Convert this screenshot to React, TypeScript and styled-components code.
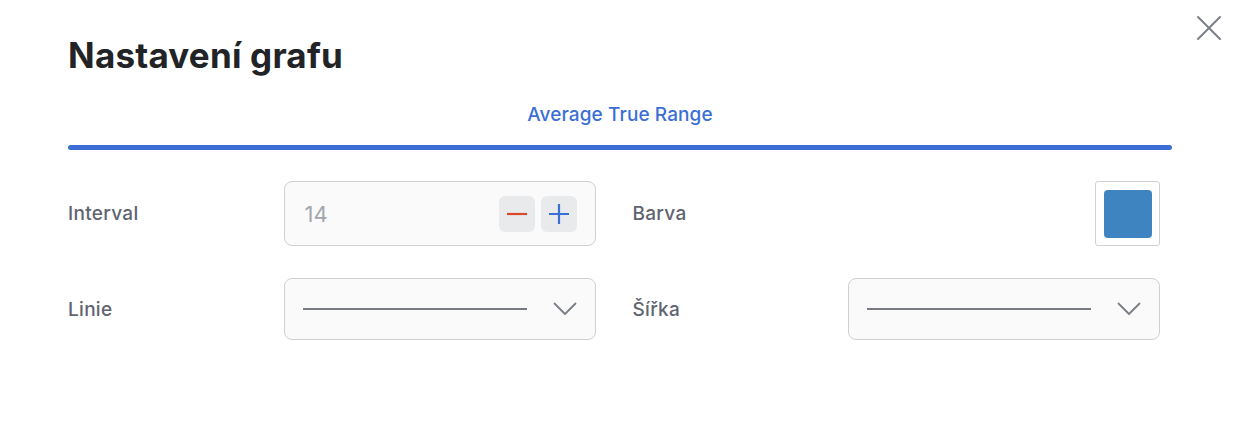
import React from 'react'
import styled, {createGlobalStyle} from 'styled-components'

const GlobalStyle = createGlobalStyle`
  html, body {
    margin: 0;
    padding: 0;
    background: #fff;
    font-family: Inter, Roboto, "Noto Sans", Arial, sans-serif;
  }
`

const blue = '#3b6fd6'

export default function App() {
  return (
    <>
      <GlobalStyle />
      <Modal>
        <CloseButton aria-label="Zavřít">
          <svg width="26" height="26" viewBox="0 0 26 26">
            <path d="M2 2 L24 24 M24 2 L2 24" stroke="#7b7f87" strokeWidth="2" strokeLinecap="round" />
          </svg>
        </CloseButton>

        <Title>Nastavení grafu</Title>

        <Tabs>
          <Tab>Average True Range</Tab>
          <TabBar />
        </Tabs>

        <Grid>
          <Field>
            <Label>Interval</Label>
            <NumberBox>
              <NumberValue>14</NumberValue>
              <Steppers>
                <StepButton aria-label="Ubrat">
                  <svg width="22" height="22" viewBox="0 0 22 22">
                    <path d="M1 11 H21" stroke="#d9482b" strokeWidth="2.2" />
                  </svg>
                </StepButton>
                <StepButton aria-label="Přidat">
                  <svg width="22" height="22" viewBox="0 0 22 22">
                    <path d="M1 11 H21 M11 1 V21" stroke={blue} strokeWidth="2.2" />
                  </svg>
                </StepButton>
              </Steppers>
            </NumberBox>
          </Field>

          <Field>
            <Label>Barva</Label>
            <SwatchBox>
              <Swatch $color="#3d84c0" />
            </SwatchBox>
          </Field>

          <Field>
            <Label>Linie</Label>
            <SelectBox>
              <LineSample />
              <Chevron />
            </SelectBox>
          </Field>

          <Field>
            <Label>Šířka</Label>
            <SelectBox>
              <LineSample />
              <Chevron />
            </SelectBox>
          </Field>
        </Grid>
      </Modal>
    </>
  )
}

const Chevron = () => (
  <svg width="24" height="14" viewBox="0 0 24 14">
    <path d="M1.5 1.5 L12 12 L22.5 1.5" fill="none" stroke="#7b7f87" strokeWidth="1.8" strokeLinecap="round" strokeLinejoin="round" />
  </svg>
)

const Modal = styled.div`
  position: relative;
  width: 1240px;
  height: 428px;
  box-sizing: border-box;
  padding: 28px 68px 0 68px;
`

const CloseButton = styled.button`
  position: absolute;
  top: 15px;
  right: 18px;
  padding: 0;
  border: none;
  background: none;
  cursor: pointer;
  display: flex;
`

const Title = styled.h1`
  margin: 0;
  font-size: 35px;
  line-height: 54px;
  font-weight: 700;
  color: #212327;
  letter-spacing: 0.2px;
`

const Tabs = styled.div`
  margin-top: 21px;
  width: 1104px;
  display: flex;
  flex-direction: column;
  align-items: center;
`

const Tab = styled.div`
  font-size: 19px;
  line-height: 24px;
  font-weight: 500;
  color: ${blue};
  letter-spacing: 0.1px;
  padding-bottom: 18px;
`

const TabBar = styled.div`
  width: 100%;
  height: 5px;
  border-radius: 3px;
  background: ${blue};
`

const Grid = styled.div`
  margin-top: 31px;
  width: 1092px;
  display: grid;
  grid-template-columns: 1fr 1fr;
  column-gap: 37px;
  row-gap: 32px;
`

const Field = styled.div`
  display: flex;
  align-items: center;
  justify-content: space-between;
`

const Label = styled.span`
  font-size: 19px;
  font-weight: 500;
  letter-spacing: 0.3px;
  color: #5f6470;
`

const controlBox = `
  box-sizing: border-box;
  border: 1px solid #cfd0d4;
  border-radius: 8px;
  background: #fafafa;
`

const NumberBox = styled.div`
  ${controlBox}
  width: 312px;
  height: 65px;
  display: flex;
  align-items: center;
  justify-content: space-between;
  padding: 0 18px 0 20px;
`

const NumberValue = styled.span`
  font-size: 22px;
  color: #a2a6ad;
`

const Steppers = styled.div`
  display: flex;
  gap: 6px;
`

const StepButton = styled.button`
  width: 36px;
  height: 36px;
  padding: 0;
  border: none;
  border-radius: 6px;
  background: #e9eaec;
  display: flex;
  align-items: center;
  justify-content: center;
  cursor: pointer;
`

const SwatchBox = styled.div`
  box-sizing: border-box;
  width: 65px;
  height: 65px;
  border: 1px solid #cfd0d4;
  border-radius: 3px;
  background: #fff;
  display: flex;
  align-items: center;
  justify-content: center;
`

const Swatch = styled.div<{$color: string}>`
  width: 48px;
  height: 48px;
  border-radius: 4px;
  background: ${p => p.$color};
`

const SelectBox = styled.div`
  ${controlBox}
  width: 312px;
  height: 62px;
  display: flex;
  align-items: center;
  gap: 26px;
  padding: 0 18px 0 18px;
`

const LineSample = styled.div`
  flex: 1;
  height: 2px;
  background: #777a80;
`
